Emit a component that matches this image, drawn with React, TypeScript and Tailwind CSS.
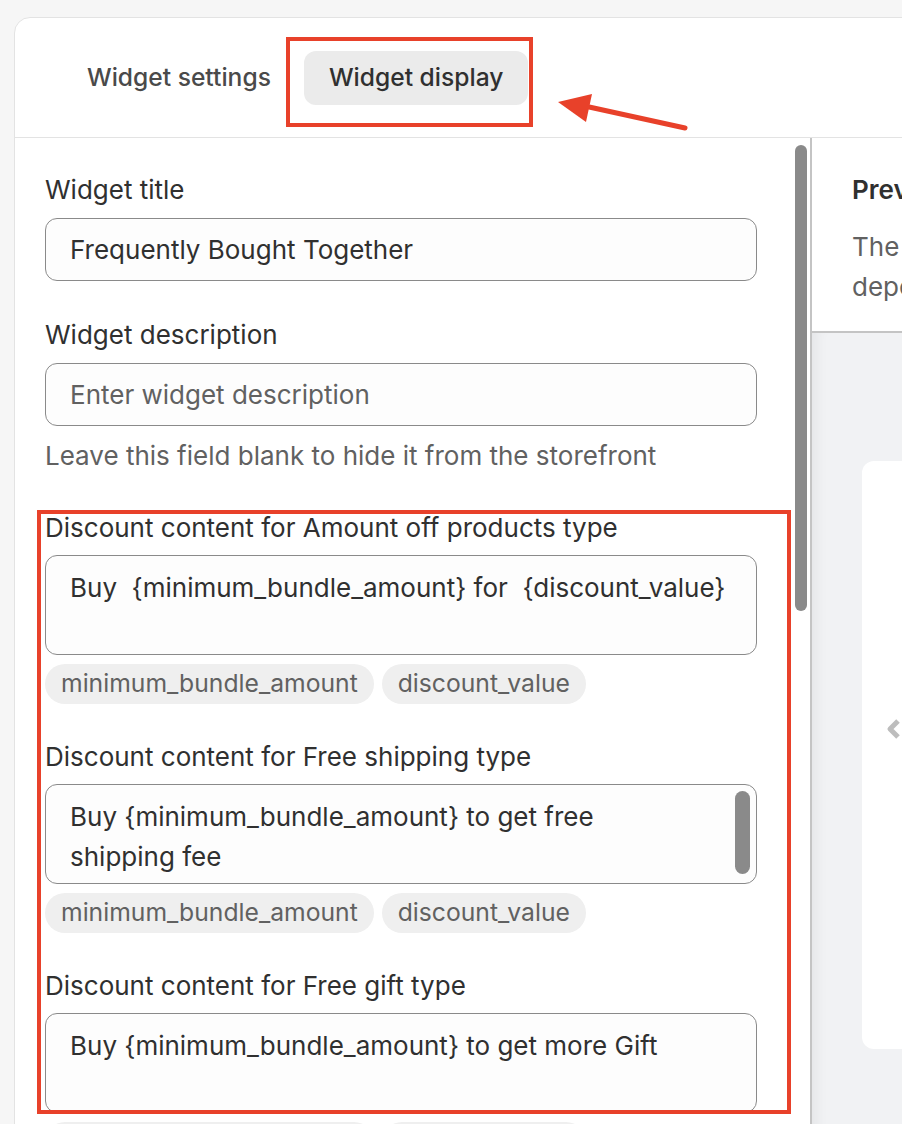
import React from 'react';

const FONT = { fontFamily: 'Inter, "Noto Sans", sans-serif' };

function Tag({ children }: { children: React.ReactNode }) {
  return (
    <span className="inline-flex items-center h-[40px] px-[16px] rounded-full bg-[#efefef] text-[24.7px] text-[#616161]">
      {children}
    </span>
  );
}

function Field({ label, value, placeholder }: { label: string; value?: string; placeholder?: string }) {
  return (
    <div className="flex flex-col">
      <div className="h-[34px] leading-[34px] text-[26px] text-[#303030]">{label}</div>
      <div className="mt-[11px] h-[63px] rounded-[12px] border border-[#8a8a8a] bg-[#fdfdfd] px-[24px] flex items-center text-[26px]">
        {value ? <span className="text-[#303030]">{value}</span> : <span className="text-[#616161]">{placeholder}</span>}
      </div>
    </div>
  );
}

function DiscountField({ label, lines, scroll }: { label: string; lines: string[]; scroll?: boolean }) {
  return (
    <div className="flex flex-col">
      <div className="h-[34px] leading-[34px] text-[26px] text-[#303030]">{label}</div>
      <div className="relative mt-[10px] h-[100px] rounded-[12px] border border-[#8a8a8a] bg-[#fdfdfd] pl-[24px] pr-[40px] pt-[12px] text-[26px] leading-[40px] text-[#303030] whitespace-pre">
        {lines.map((l, i) => (
          <div key={i}>{l}</div>
        ))}
        {scroll && <div className="absolute right-[6px] top-[6px] w-[15px] h-[83px] rounded-full bg-[#8a8a8a]" />}
      </div>
      <div className="mt-[9px] flex gap-[8px]">
        <Tag>minimum_bundle_amount</Tag>
        <Tag>discount_value</Tag>
      </div>
    </div>
  );
}

export default function App() {
  return (
    <div className="relative w-[902px] h-[1124px] overflow-hidden bg-[#f6f6f6]" style={FONT}>
      <div className="ml-[14px] mt-[17px] w-[1000px] h-[1200px] rounded-tl-[16px] border border-[#e3e3e3] bg-white flex flex-col">
        {/* tabs */}
        <div className="h-[120px] shrink-0 border-b border-[#e3e3e3] flex items-center pl-[47px] gap-[8px]">
          <div className="h-[54px] px-[25px] flex items-center rounded-[12px] text-[24.6px] font-medium text-[#4a4a4a]">
            Widget settings
          </div>
          <div className="h-[54px] px-[25px] flex items-center rounded-[12px] bg-[#ebebeb] text-[24.6px] font-medium text-[#303030]">
            Widget display
          </div>
        </div>

        <div className="flex flex-1">
          {/* left form */}
          <div className="relative w-[797px] shrink-0 border-r-2 border-[#c4c4c4] pl-[30px] pt-[35px]">
            <div className="w-[712px] flex flex-col">
              <Field label="Widget title" value="Frequently Bought Together" />
              <div className="h-[37px]" />
              <Field label="Widget description" placeholder="Enter widget description" />
              <div className="mt-[13px] h-[34px] leading-[34px] text-[26px] text-[#616161] whitespace-nowrap">
                Leave this field blank to hide it from the storefront
              </div>

              <div className="mt-[38px] flex flex-col gap-[36px]">
                <DiscountField
                  label="Discount content for Amount off products type"
                  lines={['Buy  {minimum_bundle_amount} for  {discount_value}']}
                />
                <DiscountField
                  label="Discount content for Free shipping type"
                  lines={['Buy {minimum_bundle_amount} to get free', 'shipping fee']}
                  scroll
                />
                <DiscountField
                  label="Discount content for Free gift type"
                  lines={['Buy {minimum_bundle_amount} to get more Gift']}
                />
              </div>
            </div>
            {/* page scrollbar thumb */}
            <div className="absolute left-[780px] top-[7px] w-[12px] h-[466px] rounded-full bg-[#8a8a8a]" />
          </div>

          {/* preview panel */}
          <div className="flex-1 flex flex-col">
            <div className="h-[195px] border-b-2 border-[#c4c4c4] pl-[40px] pt-[35px]">
              <div className="h-[34px] leading-[34px] text-[26px] font-semibold text-[#303030]">Preview</div>
              <div className="mt-[20px] text-[26px] leading-[40px] text-[#616161]">
                <div>The preview is for reference only</div>
                <div>depends on your theme</div>
              </div>
            </div>
            <div className="flex-1 bg-[#f1f2f4] shadow-[inset_14px_0_14px_-10px_rgba(0,0,0,0.06)] pl-[50px] pt-[128px]">
              <div className="relative w-[500px] h-[588px] rounded-[12px] bg-white">
                <svg className="absolute left-[24px] top-[256px]" width="16" height="24" viewBox="0 0 16 24">
                  <path d="M12 4 L4 12 L12 20" fill="none" stroke="#bdbdbd" strokeWidth="5" strokeLinejoin="round" />
                </svg>
              </div>
            </div>
          </div>
        </div>
      </div>

      {/* annotations */}
      <div className="absolute left-[286px] top-[37px] w-[247px] h-[90px] border-[4px] border-[#e8412a]" />
      <div className="absolute left-[37px] top-[510px] w-[754px] h-[604px] border-[4px] border-[#e8412a]" />
      <svg className="absolute left-[550px] top-[88px]" width="145" height="50" viewBox="0 0 145 50">
        <line x1="135" y1="40" x2="30" y2="17" stroke="#e8412a" strokeWidth="5" strokeLinecap="round" />
        <polygon points="8,14 42,6 36,34" fill="#e8412a" />
      </svg>
    </div>
  );
}
